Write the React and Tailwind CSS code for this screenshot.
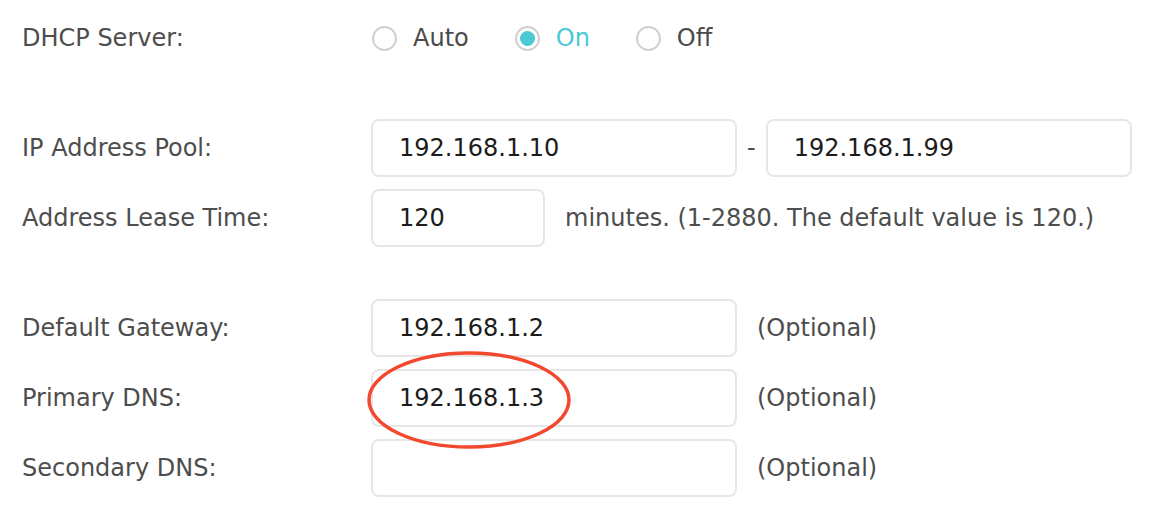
import React from "react";

const FONT = { fontFamily: '"DejaVu Sans", Verdana, sans-serif' };

const Radio = ({ label, checked }) => (
  <label className="flex items-center">
    <span className="flex h-[25px] w-[25px] items-center justify-center rounded-full border-2 border-[#cfcfcf]">
      {checked && <span className="h-[15px] w-[15px] rounded-full bg-[#4dc9d5]" />}
    </span>
    <span className={`ml-[16px] ${checked ? "text-[#4dc9d5]" : "text-[#4a4a4a]"}`}>{label}</span>
  </label>
);

const Field = ({ value, width = "w-[366px]" }) => (
  <input
    readOnly
    value={value}
    style={FONT}
    className={`${width} h-[58px] rounded-[8px] border-2 border-[#e6e6e6] bg-white px-[26px] text-[24px] text-[#1c1c1c] outline-none`}
  />
);

const Row = ({ label, children, className = "" }) => (
  <div className={`flex h-[58px] items-center ${className}`}>
    <div className="w-[349px] text-[#4d4d4d]">{label}</div>
    {children}
  </div>
);

export default function App() {
  return (
    <div style={FONT} className="h-[518px] w-[1160px] bg-white px-[22px] text-[24px] leading-none">
      <div className="flex h-[76px] items-center">
        <div className="w-[350px] text-[#4d4d4d]">DHCP Server:</div>
        <div className="flex items-center gap-[46px]">
          <Radio label="Auto" />
          <Radio label="On" checked />
          <Radio label="Off" />
        </div>
      </div>

      <Row label="IP Address Pool:" className="mt-[43px]">
        <Field value="192.168.1.10" />
        <span className="mx-[10px] text-[#4d4d4d]">-</span>
        <Field value="192.168.1.99" />
      </Row>

      <Row label="Address Lease Time:" className="mt-[12px]">
        <Field value="120" width="w-[174px]" />
        <span className="ml-[20px] text-[#4d4d4d]">minutes. (1-2880. The default value is 120.)</span>
      </Row>

      <Row label="Default Gateway:" className="mt-[52px]">
        <Field value="192.168.1.2" />
        <span className="ml-[20px] text-[#4d4d4d]">(Optional)</span>
      </Row>

      <Row label="Primary DNS:" className="mt-[12px]">
        <div className="relative">
          <Field value="192.168.1.3" />
          <svg
            className="pointer-events-none absolute left-[-4px] top-[-19px]"
            width="206"
            height="100"
            viewBox="0 0 206 100"
          >
            <ellipse cx="102" cy="50" rx="100" ry="47" fill="none" stroke="#f2482d" strokeWidth="3.5" />
          </svg>
        </div>
        <span className="ml-[20px] text-[#4d4d4d]">(Optional)</span>
      </Row>

      <Row label="Secondary DNS:" className="mt-[12px]">
        <Field value="" />
        <span className="ml-[20px] text-[#4d4d4d]">(Optional)</span>
      </Row>
    </div>
  );
}
